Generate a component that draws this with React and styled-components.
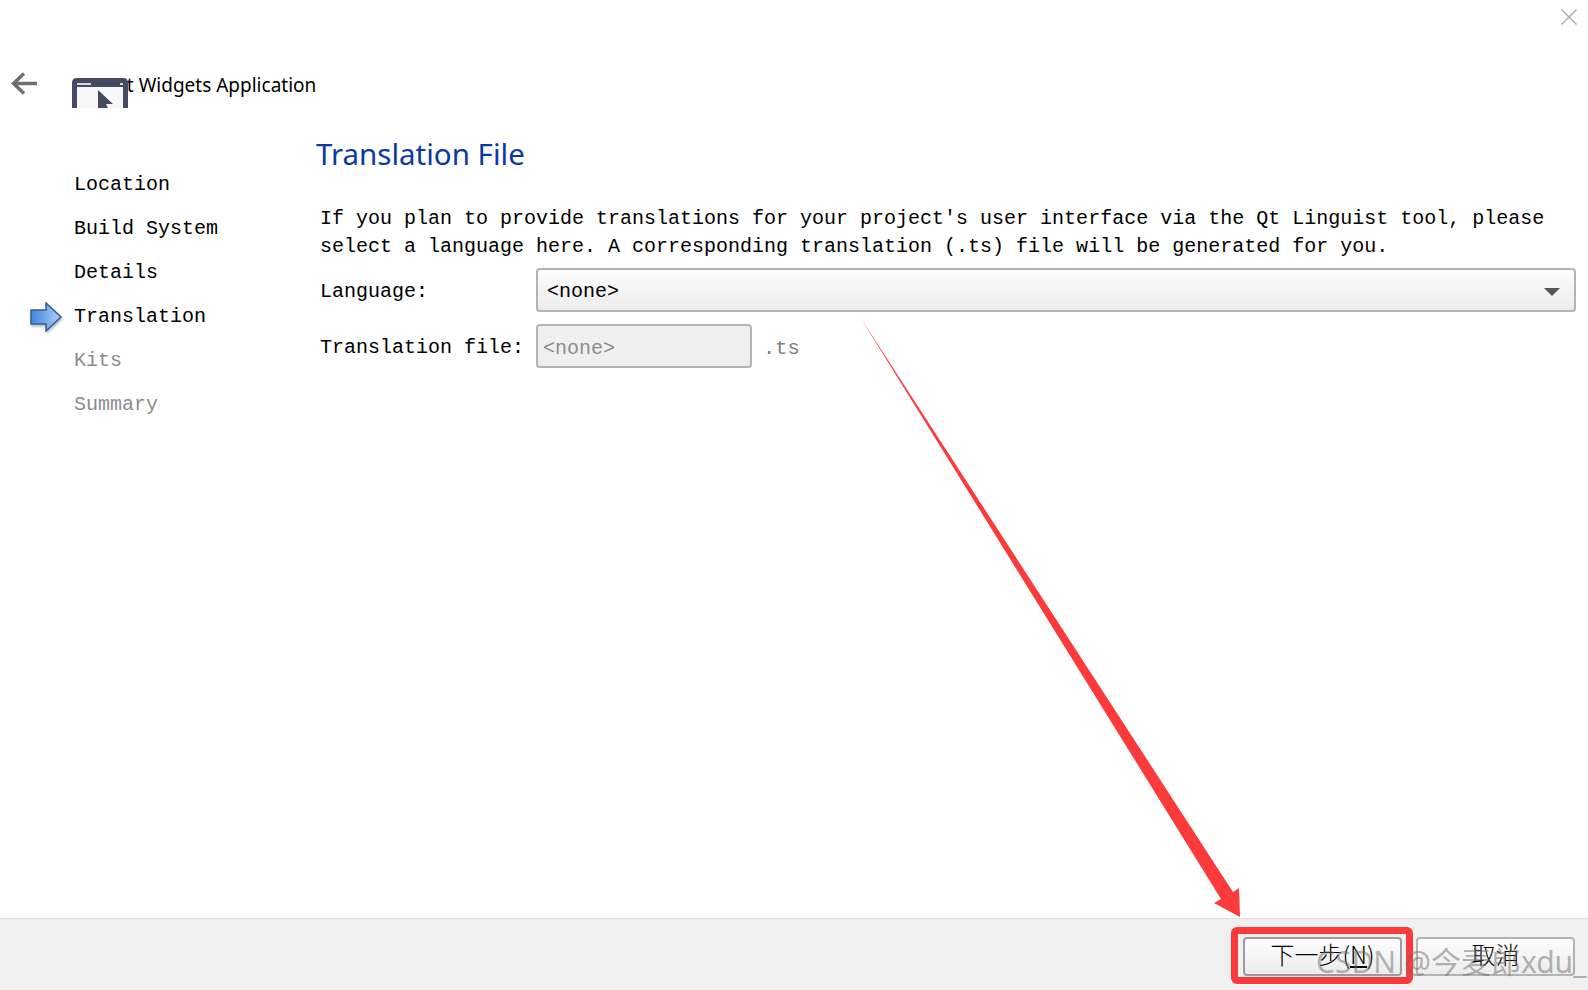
import React from "react";
import styled, { createGlobalStyle } from "styled-components";

const Global = createGlobalStyle`
  html, body { margin: 0; padding: 0; background: #fff; }
  body { font-family: "Liberation Mono", "Noto Sans CJK SC", monospace; overflow: hidden; }
`;

const Page = styled.div`
  position: relative;
  width: 1588px;
  height: 990px;
  display: flex;
  flex-direction: column;
  overflow: hidden;
  color: #000;
`;

const TopBar = styled.div`
  height: 72px;
  flex: none;
  display: flex;
  justify-content: flex-end;
  padding: 9px 11px 0 0;
  box-sizing: border-box;
`;

const WizardHead = styled.div`
  height: 36px;
  flex: none;
  display: flex;
  align-items: flex-start;
  padding-left: 11px;
`;

const BackIcon = styled.svg`
  width: 26px;
  height: 24px;
  flex: none;
`;

const AppIcon = styled.svg`
  width: 56px;
  height: 30px;
  margin: 6px 0 0 35px;
  flex: none;
  position: relative;
  z-index: 1;
`;

const AppTitle = styled.div`
  font-family: "Noto Sans", sans-serif;
  font-size: 19px;
  line-height: 26px;
  margin: 0 0 0 -16px;
  white-space: nowrap;
`;

const Body = styled.div`
  flex: 1;
  display: flex;
  min-height: 0;
`;

const Sidebar = styled.div`
  width: 316px;
  flex: none;
  padding-top: 55px;
  box-sizing: border-box;
  display: flex;
  flex-direction: column;
`;

const Step = styled.div`
  height: 44px;
  line-height: 44px;
  padding-left: 74px;
  font-size: 20px;
  position: relative;
  color: ${(p) => (p.$muted ? "#8c8c8c" : "#000")};
`;

const StepArrow = styled.svg`
  position: absolute;
  left: 30px;
  top: 7px;
  width: 33px;
  height: 30px;
  filter: drop-shadow(1px 2px 1px rgba(0, 0, 0, 0.25));
`;

const Main = styled.div`
  flex: 1;
  min-width: 0;
  display: flex;
  flex-direction: column;
  padding-top: 23px;
`;

const Heading = styled.h1`
  margin: 0;
  font-family: "Noto Sans", sans-serif;
  font-weight: 400;
  font-size: 29.5px;
  line-height: 46px;
  color: #0a3aa3;
`;

const Intro = styled.p`
  margin: 28px 0 0 4px;
  font-size: 20px;
  line-height: 28px;
  white-space: pre;
`;

const FormRow = styled.div`
  display: flex;
  align-items: center;
  margin-top: ${(p) => p.$top}px;
`;

const Label = styled.label`
  width: 220px;
  flex: none;
  padding: 2px 0 0 4px;
  box-sizing: border-box;
  font-size: 20px;
`;

const Combo = styled.div`
  width: 1040px;
  height: 44px;
  box-sizing: border-box;
  border: 2px solid #b4b4b4;
  border-radius: 4px;
  background: linear-gradient(#fdfdfd, #ececec);
  display: flex;
  align-items: center;
  justify-content: space-between;
  padding: 3px 14px 0 9px;
  font-size: 20px;
`;

const Caret = styled.span`
  width: 0;
  height: 0;
  border-left: 8px solid transparent;
  border-right: 8px solid transparent;
  border-top: 8px solid #555;
`;

const FileInput = styled.div`
  width: 216px;
  height: 44px;
  box-sizing: border-box;
  border: 2px solid #b4b4b4;
  border-radius: 4px;
  background: #efefef;
  display: flex;
  align-items: center;
  padding: 4px 0 0 5px;
  font-size: 20px;
  color: #8c8c8c;
`;

const Suffix = styled.span`
  margin: 4px 0 0 11px;
  font-size: 20.5px;
  color: #808080;
`;

const Footer = styled.div`
  height: 72px;
  flex: none;
  box-sizing: border-box;
  background: #f0f0f0;
  border-top: 1px solid #dcdcdc;
  display: flex;
  justify-content: flex-end;
  gap: 14px;
  padding: 18px 13px 0 0;
`;

const Button = styled.button`
  width: 159px;
  height: 39px;
  box-sizing: border-box;
  border: 2px solid ${(p) => (p.$primary ? "#9c9c9c" : "#b4b4b4")};
  border-radius: 4px;
  background: linear-gradient(#fdfdfd, #ececec);
  font-family: "Noto Sans CJK SC", "Liberation Mono", sans-serif;
  font-size: 24px;
  line-height: 30px;
  font-weight: 300;
  color: #000;
  padding: 0 0 5px;
`;

const Underlined = styled.span`
  text-decoration: underline;
`;

const RedBox = styled.div`
  position: absolute;
  left: 1231px;
  top: 927px;
  width: 182px;
  height: 57px;
  box-sizing: border-box;
  border: 7px solid #fb3b3b;
  border-radius: 6px;
`;

const Annotation = styled.svg`
  position: absolute;
  left: 0;
  top: 0;
  width: 1588px;
  height: 990px;
  pointer-events: none;
`;

const Watermark = styled.div`
  position: absolute;
  left: 1316px;
  top: 940px;
  font-family: "Noto Sans", "Noto Sans CJK SC", sans-serif;
  font-size: 30px;
  line-height: 44px;
  white-space: nowrap;
  color: rgba(110, 110, 110, 0.5);
`;

export default function App() {
  return (
    <Page>
      <Global />
      <TopBar>
        <svg width="16" height="16" viewBox="0 0 16 16" fill="none" stroke="#a8a8a8" strokeWidth="1.3">
          <path d="M0.5 0.5 L15.5 15.5 M15.5 0.5 L0.5 15.5" />
        </svg>
      </TopBar>
      <WizardHead>
        <BackIcon viewBox="0 0 26 24" fill="none" stroke="#6f6f6f" strokeWidth="3.4">
          <path d="M26 11.5 H3 M13 1.5 L2.5 11.5 L13 21.5" />
        </BackIcon>
        <AppIcon viewBox="0 0 56 30">
          <path d="M0 30 V5 Q0 0 5 0 H51 Q56 0 56 5 V30 H51 V9 H5 V30 Z" fill="#444a60" />
          <rect x="5" y="9" width="46" height="21" fill="#f8f8f8" />
          <rect x="5" y="5" width="14" height="2" fill="#d5d6dc" />
          <rect x="48" y="5" width="3" height="2" fill="#d5d6dc" />
          <path d="M26 12 L41 26 L34 26 L36 30 L26 30 Z" fill="#444a60" />
        </AppIcon>
        <AppTitle>Qt Widgets Application</AppTitle>
      </WizardHead>
      <Body>
        <Sidebar>
          <Step>Location</Step>
          <Step>Build System</Step>
          <Step>Details</Step>
          <Step>
            <StepArrow viewBox="0 0 33 30">
              <defs>
                <linearGradient id="stepFill" x1="0" x2="1" y1="0" y2="0">
                  <stop offset="0" stopColor="#3f83e0" />
                  <stop offset="1" stopColor="#b4d0f4" />
                </linearGradient>
              </defs>
              <path d="M1 8 H16 V1 L31 15 L16 29 V22 H1 Z" fill="url(#stepFill)" stroke="#2f5f97" strokeWidth="1.5" />
            </StepArrow>
            Translation
          </Step>
          <Step $muted>Kits</Step>
          <Step $muted>Summary</Step>
        </Sidebar>
        <Main>
          <Heading>Translation File</Heading>
          <Intro>{"If you plan to provide translations for your project's user interface via the Qt Linguist tool, please\nselect a language here. A corresponding translation (.ts) file will be generated for you."}</Intro>
          <FormRow $top={7}>
            <Label>Language:</Label>
            <Combo>
              {"<none>"}
              <Caret />
            </Combo>
          </FormRow>
          <FormRow $top={12}>
            <Label>Translation file:</Label>
            <FileInput>{"<none>"}</FileInput>
            <Suffix>.ts</Suffix>
          </FormRow>
        </Main>
      </Body>
      <Footer>
        <Button $primary>
          下一步(<Underlined>N</Underlined>)
        </Button>
        <Button>取消</Button>
      </Footer>
      <Annotation viewBox="0 0 1588 990">
        <path d="M860 317 L1233 892 L1239 888 L1240 917 L1214 903 L1221 899 Z" fill="#fb3b3b" />
      </Annotation>
      <RedBox />
      <Watermark>CSDN @今麦郎xdu_</Watermark>
    </Page>
  );
}
